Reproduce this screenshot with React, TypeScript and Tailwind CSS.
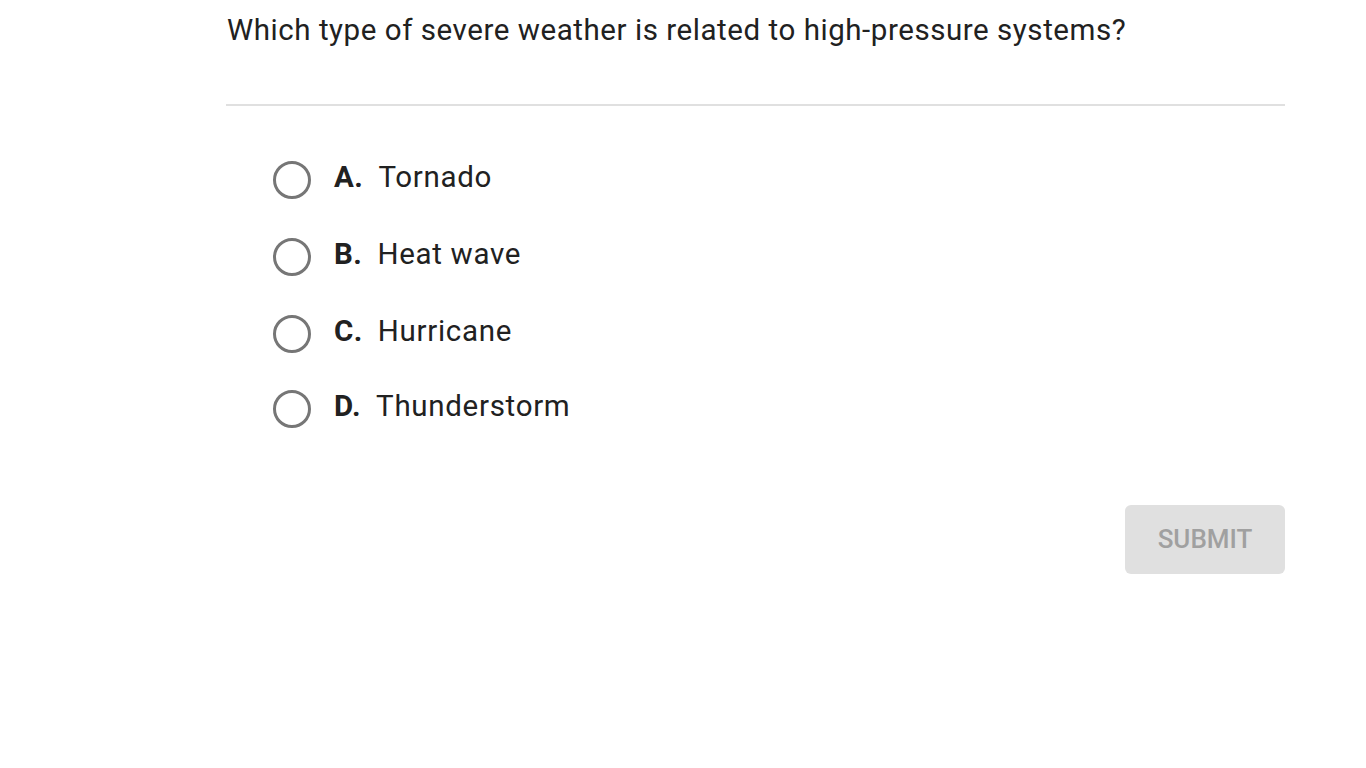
import React from "react";

const options = [
  { l: "A.", t: "Tornado" },
  { l: "B.", t: "Heat wave" },
  { l: "C.", t: "Hurricane" },
  { l: "D.", t: "Thunderstorm" },
];

export default function App() {
  return (
    <div className="w-[1366px] h-[768px] bg-white text-[#212121]" style={{ fontFamily: "Roboto, 'Liberation Sans', sans-serif" }}>
      <div className="ml-[226px] w-[1059px] pt-[11px]">
        <div className="text-[29.5px] tracking-[0.55px] leading-[38px] pl-px">Which type of severe weather is related to high-pressure systems?</div>
        <div className="mt-[55px] h-[2px] bg-[#e0e0e0]" />
        <div className="mt-[45px] ml-[47px] flex flex-col">
          {options.map((o, i) => (
            <div key={o.l} className={"flex items-center h-[52px] " + (i === 0 ? "" : i === 3 ? "mt-[23px]" : "mt-[25px]")}>
              <div className="w-[38px] h-[38px] rounded-full border-[3px] border-[#767676] mt-[5px]" />
              <div className="ml-[23px] text-[29.5px] font-bold tracking-[0.5px]">{o.l}</div>
              <div className="ml-[15px] text-[29.5px] tracking-[0.7px]">{o.t}</div>
            </div>
          ))}
        </div>
        <div className="mt-[73px] flex justify-end">
          <div className="w-[160px] h-[69px] rounded-[6px] bg-[#e0e0e0] text-[#a0a0a0] text-[26px] font-medium flex items-center justify-center">SUBMIT</div>
        </div>
      </div>
    </div>
  );
}
